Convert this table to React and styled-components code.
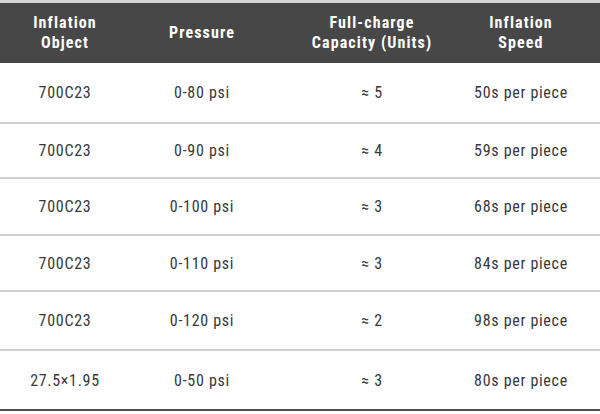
import styled, { createGlobalStyle } from "styled-components";

const Global = createGlobalStyle`
  body {
    margin: 0;
    background: #ffffff;
    font-family: "Roboto Condensed", Roboto, "Liberation Sans", sans-serif;
  }
`;

const Tabla = styled.div`
  width: 600px;
  border-top: 3px solid #d4d4d4;
  border-bottom: 2px solid #4d4d4d;
`;

const Fila = styled.div`
  display: grid;
  grid-template-columns: 130px 144px 196px 1fr;
  height: ${(p) => p.alto}px;
  align-items: center;
  background: ${(p) => (p.cabecera ? "#474747" : "#ffffff")};
  border-bottom: ${(p) => (p.ultima || p.cabecera ? "none" : "2px solid #cfcfcf")};
  box-sizing: border-box;
`;

const Celda = styled.div`
  text-align: center;
  font-size: 16px;
  letter-spacing: 0.7px;
  color: #383838;
  padding-right: ${(p) => (p.fin ? "28px" : "0")};
`;

const Titulo = styled(Celda)`
  color: #ffffff;
  font-weight: 700;
  line-height: 20px;
  letter-spacing: 1.1px;
`;

const filas = [
  ["700C23", "0-80 psi", "≈ 5", "50s per piece", 61],
  ["700C23", "0-90 psi", "≈ 4", "59s per piece", 55],
  ["700C23", "0-100 psi", "≈ 3", "68s per piece", 57],
  ["700C23", "0-110 psi", "≈ 3", "84s per piece", 56],
  ["700C23", "0-120 psi", "≈ 2", "98s per piece", 59],
  ["27.5×1.95", "0-50 psi", "≈ 3", "80s per piece", 58],
];

export default function App() {
  return (
    <>
      <Global />
      <Tabla>
        <Fila cabecera alto={60}>
          <Titulo>Inflation<br />Object</Titulo>
          <Titulo>Pressure</Titulo>
          <Titulo>Full-charge<br />Capacity (Units)</Titulo>
          <Titulo fin>Inflation<br />Speed</Titulo>
        </Fila>
        {filas.map((f, i) => (
          <Fila key={i} alto={f[4]} ultima={i === filas.length - 1}>
            <Celda>{f[0]}</Celda>
            <Celda>{f[1]}</Celda>
            <Celda>{f[2]}</Celda>
            <Celda fin>{f[3]}</Celda>
          </Fila>
        ))}
      </Tabla>
    </>
  );
}
